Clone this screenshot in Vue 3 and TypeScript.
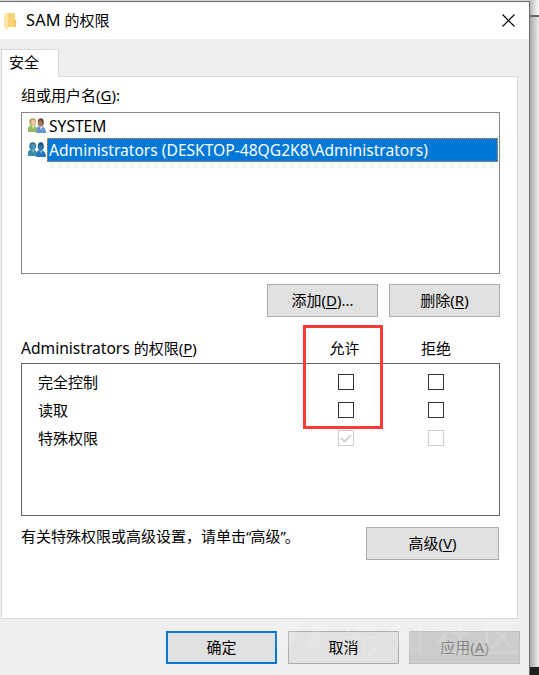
<script setup lang="ts">
interface Group { name: string; selected: boolean }
interface Permission { label: string; disabled: boolean; allow: boolean; deny: boolean }

const groups: Group[] = [
  { name: 'SYSTEM', selected: false },
  { name: 'Administrators (DESKTOP-48QG2K8\\Administrators)', selected: true },
]
const permissions: Permission[] = [
  { label: '完全控制', disabled: false, allow: false, deny: false },
  { label: '读取', disabled: false, allow: false, deny: false },
  { label: '特殊权限', disabled: true, allow: true, deny: false },
]
</script>

<template>
  <div class="desktop">
    <main class="dialog">
      <header class="titlebar">
        <svg class="folder" width="13" height="18" viewBox="0 0 13 18">
          <path d="M3 1H11V15H3Z" fill="#f7d477" />
          <path d="M10 8H12.2V15H10Z" fill="#efc65f" />
          <path d="M0 1L4 3V18L0 15Z" fill="#fbe6a2" />
        </svg>
        <h1><b class="latin">SAM</b> 的权限</h1>
        <svg class="close" width="13" height="13" viewBox="0 0 13 13">
          <path d="M.5 .5L12.5 12.5M12.5 .5L.5 12.5" stroke="#000" stroke-width="1.2" />
        </svg>
      </header>
      <div class="tabs"><div class="tab">安全</div></div>
      <section class="panel">
        <div class="caption">组或用户名(<u>G</u>):</div>
        <ul class="groups">
          <li v-for="g in groups" :key="g.name" :class="{ selected: g.selected }">
            <svg class="people" width="18" height="16" viewBox="0 0 18 16">
              <path d="M8 15V11Q9 8 13 8Q18 9 18 15Z" :fill="g.selected ? '#2475bc' : '#6396d2'" />
              <path d="M0 14V10Q1 7 5 7Q9 8 9 14Z" :fill="g.selected ? '#388aa5' : '#94b866'" />
              <path d="M3.5 7L5 11L7 7Z" :fill="g.selected ? '#7cb8d5' : '#e2e6c2'" />
              <path d="M11.5 8L13 12L15 8Z" :fill="g.selected ? '#76b9e6' : '#dce8f2'" />
              <ellipse cx="4.7" cy="4" rx="3.4" ry="3.8" :fill="g.selected ? '#286f90' : '#b79b5b'" />
              <ellipse cx="5.3" cy="4.8" rx="2.2" ry="3" :fill="g.selected ? '#4c9abb' : '#edc99c'" />
              <ellipse cx="12.8" cy="4.3" rx="3" ry="4" :fill="g.selected ? '#165784' : '#65483a'" />
              <ellipse cx="12.3" cy="5.5" rx="2" ry="3" :fill="g.selected ? '#2c77a8' : '#ad795a'" />
            </svg>
            <span>{{ g.name }}</span>
          </li>
        </ul>
        <div class="group-actions">
          <button>添加(<u>D</u>)...</button>
          <button>删除(<u>R</u>)</button>
        </div>
        <div class="permission-head">
          <span><b class="latin">Administrators</b> 的权限(<u>P</u>)</span><span>允许</span><span>拒绝</span>
          <i class="highlight"></i>
        </div>
        <div class="permissions">
          <div v-for="p in permissions" :key="p.label" class="permission" :class="{ disabled: p.disabled }">
            <span>{{ p.label }}</span>
            <i v-for="(checked, index) in [p.allow, p.deny]" :key="index" class="check">
              <svg v-if="checked" width="14" height="14" viewBox="0 0 14 14"><path d="M2 7L5.5 10.5L12 4" fill="none" stroke="#ccc" stroke-width="1.7" /></svg>
            </i>
          </div>
        </div>
        <div class="advanced"><span>有关特殊权限或高级设置，请单击<q>高级</q>。</span><button>高级(<u>V</u>)</button></div>
      </section>
      <footer>
        <button class="primary">确定</button><button>取消</button><button class="inactive" disabled>应用(<u>A</u>)</button>
      </footer>
      <div class="watermark" aria-hidden="true">
        <svg width="60" height="36" viewBox="0 0 60 36"><path d="M0 1H27L15 27H0ZM29 27L45 -8V27Z" /></svg>
        <span>先知社区</span>
      </div>
    </main>
    <aside class="behind"></aside>
  </div>
</template>

<style>
body { overflow: hidden; }
</style>
<style scoped>
* { box-sizing: border-box; }
.desktop { width: 539px; height: 675px; display: flex; background: #d5d5d5; padding-top: 1px; font: 15px/20px "Noto Sans", "Noto Sans CJK SC", sans-serif; color: #000; }
.dialog { position: relative; width: 530px; height: 674px; flex: none; background: #efefef; border-top: 1px solid #6b6b6b; border-right: 1px solid #6b6b6b; }
.titlebar { height: 37px; background: #fff; display: flex; align-items: center; padding: 0 14px 0 4px; }
.folder { margin-top: 1px; }
h1 { margin: -2px auto 0 9px; font-size: 15px; font-weight: 400; }
.latin { font-weight: 400; font-size: 15.6px; line-height: 1; }
h1 .latin { font-size: 16.3px; letter-spacing: .2px; }
.tabs { height: 37px; padding: 10px 0 0 1px; }
.tab { position: relative; width: 58px; height: 28px; background: #fff; border: 1px solid #d9d9d9; border-bottom: 0; padding: 2px 7px; z-index: 1; }
.panel { width: 517px; height: 543px; margin-left: 1px; border: 1px solid #d9d9d9; padding: 8px 17px 0 19px; background: #fff; }
.caption { height: 27px; }
.groups { margin: 0; padding: 1px; list-style: none; height: 162px; border: 1px solid #828790; font-size: 15.6px; }
.groups li { height: 24px; display: flex; align-items: center; padding-left: 5px; }
.people { flex: none; margin-top: -1px; }
.groups span { margin-left: 1px; padding: 0 1px; height: 24px; flex: 1; border: 1px solid transparent; line-height: 23px; white-space: nowrap; }
.groups .selected span { color: #fff; background: #0078d7; border: 1px dotted #ff8728; }
.group-actions { display: flex; justify-content: flex-end; gap: 11px; margin-top: 10px; }
button { width: 111px; height: 33px; padding: 0 0 2px; border: 1px solid #adadad; background: #e1e1e1; font: inherit; color: #000; }
u { text-underline-offset: 2px; text-decoration-thickness: 1px; }
.permission-head { position: relative; display: grid; grid-template-columns: 278px 91px 92px; margin-top: 21px; height: 25px; }
.permission-head span:not(:first-child) { text-align: center; }
.highlight { position: absolute; left: 282px; top: -13px; width: 80px; height: 104px; border: 3px solid #ff3838; z-index: 2; }
.permissions { height: 153px; border: 1px solid #646464; padding: 4px 0 0 16px; }
.permission { height: 28px; display: grid; grid-template-columns: 300px 90px 16px; align-items: center; }
.check { width: 16px; height: 16px; border: 1px solid #333; background: #fff; }
.check svg { display: block; }
.disabled .check { border-color: #ccc; }
.advanced { display: flex; justify-content: space-between; padding: 11px 1px 0 0; }
.advanced span { margin-top: -1px; }
.advanced button { width: 133px; }
q { quotes: none; }
q::before { content: "“"; letter-spacing: -1px; }
q::after { content: "”"; letter-spacing: -1px; }
footer { display: flex; gap: 11px; padding: 12px 0 0 166px; }
footer button { padding-bottom: 1px; }
footer .primary { border: 2px solid #0078d7; }
footer .inactive { margin-left: -1px; background: #ccc; border-color: #bfbfbf; color: #838383; }
.watermark { position: absolute; left: 276px; top: 618px; display: flex; gap: 5px; color: #fff; opacity: .14; font-size: 37px; line-height: 36px; letter-spacing: 10px; white-space: nowrap; pointer-events: none; }
.watermark svg { overflow: visible; }
.watermark path { fill: #fff; }
.behind { flex: 1; height: 667px; margin-top: -1px; border-bottom: 8px solid #202020; background: linear-gradient(90deg, #a9a9a9, #ececec); box-sizing: content-box; }
.behind::before { content: ""; display: block; height: 15px; border-bottom: 2px solid #6b6870; background: linear-gradient(90deg, #b8b8b8, #fff); }
</style>
